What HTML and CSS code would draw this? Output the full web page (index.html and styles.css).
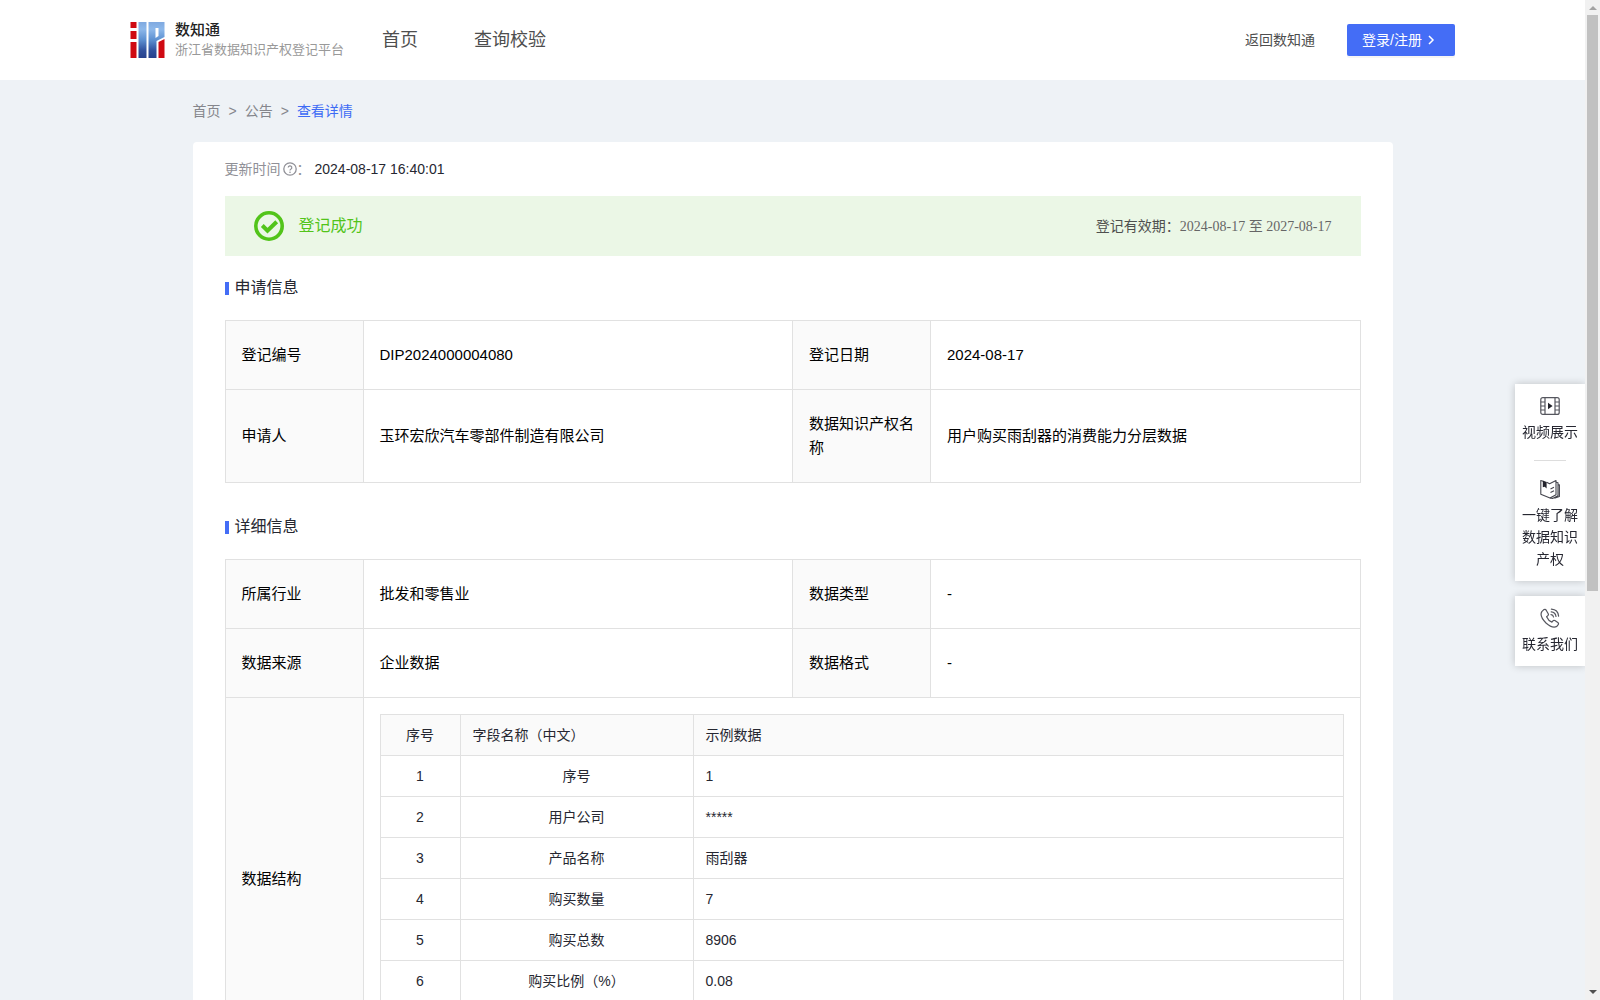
FILE: index.html
```
<!DOCTYPE html>
<html lang="zh-CN">
	<head>
		<meta charset="utf-8">
		<title>浙江省数据知识产权登记平台</title>
		<link rel="stylesheet" href="styles.css">
	</head>
	<body>
		<div class="page">
			<header class="header">
				<a class="logo" href="#">
					<svg class="logo-img" viewBox="0 0 34 36" aria-hidden="true">
						<defs>
							<linearGradient id="blue" x1="0" y1="0" x2="0" y2="1">
								<stop offset="0" stop-color="#7fa9e0"/>
								<stop offset="0.2" stop-color="#8db8ea"/>
								<stop offset="0.5" stop-color="#5c8fd0"/>
								<stop offset="0.8" stop-color="#2f4f9c"/>
								<stop offset="1" stop-color="#26408c"/>
							</linearGradient>
						</defs>
						<path fill="#cf0a12" d="M0 0h6v6H0zM0 9h6v8H0zM0 20h6v16H0zM28 20l6-3v19h-6z"/>
						<path fill="url(#blue)" d="M8 0h8v36H8zM18 0h16v15l-8 4v17h-8z"/>
						<path fill="#fff" d="M25 6h3v8l-3 2z"/>
					</svg>
					<span class="logo-text">
						<strong>数知通</strong>
						<small>浙江省数据知识产权登记平台</small>
					</span>
				</a>
				<nav class="nav">
					<a href="#">首页</a>
					<a href="#">查询校验</a>
				</nav>
				<a class="back" href="#">返回数知通</a>
				<button type="button" class="login">登录/注册
					<svg viewBox="0 0 8 10" aria-hidden="true"><path d="M2 1l4 4-4 4" fill="none" stroke="#fff" stroke-width="1.5"/></svg>
				</button>
			</header>

			<main class="main">
				<div class="crumbs">
					<a href="#">首页</a><span>&gt;</span><a href="#">公告</a><span>&gt;</span><a class="cur" href="#">查看详情</a>
				</div>
				<div class="card">
					<div class="update">
						<span class="gray">更新时间</span>
						<svg viewBox="0 0 14 14" aria-hidden="true"><circle cx="7" cy="7" r="6.2" fill="none" stroke="#909097" stroke-width="1.3"/><path d="M5.2 5.6a1.8 1.8 0 1 1 2.6 1.6c-.6.3-.8.6-.8 1.2" fill="none" stroke="#909097" stroke-width="1.2"/><circle cx="7" cy="10.2" r=".8" fill="#909097"/></svg>
						<span class="gray">：</span>
						<time>2024-08-17 16:40:01</time>
					</div>

					<div class="banner">
						<svg viewBox="0 0 30 30" aria-hidden="true"><circle cx="15" cy="15" r="13.2" fill="none" stroke="#52c41a" stroke-width="3.6"/><path d="M8.300 14.500l5.200 5.200 9.200-9" fill="none" stroke="#52c41a" stroke-width="4"/></svg>
						<span class="state">登记成功</span>
						<span class="valid">登记有效期：<span>2024-08-17 至 2027-08-17</span></span>
					</div>

					<h2 class="title">申请信息</h2>
					<table class="info">
						<tr>
							<th scope="row">登记编号</th>
							<td>DIP2024000004080</td>
							<th scope="row">登记日期</th>
							<td>2024-08-17</td>
						</tr>
						<tr>
							<th scope="row">申请人</th>
							<td>玉环宏欣汽车零部件制造有限公司</td>
							<th scope="row">数据知识产权名称</th>
							<td>用户购买雨刮器的消费能力分层数据</td>
						</tr>
					</table>

					<h2 class="title second">详细信息</h2>
					<table class="info">
						<tr>
							<th scope="row">所属行业</th>
							<td>批发和零售业</td>
							<th scope="row">数据类型</th>
							<td>-</td>
						</tr>
						<tr>
							<th scope="row">数据来源</th>
							<td>企业数据</td>
							<th scope="row">数据格式</th>
							<td>-</td>
						</tr>
						<tr>
							<th scope="row">数据结构</th>
							<td class="inner" colspan="3">
								<table class="fields">
									<thead>
										<tr><th scope="col">序号</th><th scope="col">字段名称（中文）</th><th scope="col">示例数据</th></tr>
									</thead>
									<tbody>
										<tr><td>1</td><td>序号</td><td>1</td></tr>
										<tr><td>2</td><td>用户公司</td><td>*****</td></tr>
										<tr><td>3</td><td>产品名称</td><td>雨刮器</td></tr>
										<tr><td>4</td><td>购买数量</td><td>7</td></tr>
										<tr><td>5</td><td>购买总数</td><td>8906</td></tr>
										<tr><td>6</td><td>购买比例（%）</td><td>0.08</td></tr>
										<tr><td></td><td></td><td></td></tr>
									</tbody>
								</table>
							</td>
						</tr>
					</table>
				</div>
			</main>
		</div>

		<aside class="side">
			<div class="side-box">
				<a href="#">
					<svg viewBox="0 0 20 20" aria-hidden="true"><g fill="none" stroke="#55565e" stroke-width="1.2"><rect x=".8" y="1.6" width="18.4" height="16.8" rx="2"/><path d="M5 1.6v16.8M15 1.6v16.8M.8 6H5M.8 10H5M.8 14H5M15 6h4.2M15 10h4.2M15 14h4.2"/></g><path fill="#22232b" d="M8 6.8l4.600 3.200L8 13.200z"/></svg>
					视频展示
				</a>
				<hr>
				<a href="#">
					<svg viewBox="0 0 20 20" aria-hidden="true"><g fill="none" stroke="#44454d" stroke-width="1.1" stroke-linejoin="round"><path d="M3 2.200L.8 1.500v13.700L10 19l6-3.200V1.600L9.600 4.800 6.600 3.200"/><path d="M16 3.200l2 .5v13L12.500 19.400 10 19M18 5.500l1.400.4v11.600l-5 1.700M10.500 10l3.500-1.800M10.500 13.500l3.500-1.800"/></g><path fill="#22232b" d="M2.800 1.600L6.600 3v6.600L4.700 7.800l-1.900.4z"/></svg>
					一键了解数据知识产权
				</a>
			</div>
			<div class="side-box">
				<a href="#">
					<svg viewBox="0 0 20 20" aria-hidden="true"><g fill="none" stroke="#55565e" stroke-width="1.2" stroke-linejoin="round" stroke-linecap="round"><path d="M3.6 1.8L1.8 3.6C-.2 7 3 12 6 15c3.400 3 7.600 5 10.800 3.400l1.400-1.800c.5-.8.3-1.600-.4-2.100l-2.900-1.900c-.8-.5-1.500-.3-2 .3l-1 1.200c-2-.8-4.400-3.300-5.300-5.400l1.300-1.100c.6-.5.7-1.200.3-1.900L6.200 2.200c-.7-1-1.700-1.100-2.600-.4z"/><path d="M11 6.600c1.300.1 2.300 1.100 2.500 2.400M11.200 3.900c2.700.2 4.500 2 4.800 4.600M11.400 1.200c4.200.3 6.800 2.800 7.200 6.900"/></g></svg>
					联系我们
				</a>
			</div>
		</aside>

		<div class="scroll" aria-hidden="true">
			<i class="up"></i>
			<i class="thumb"></i>
			<i class="down"></i>
		</div>
	</body>
</html>
```
FILE: styles.css
```
*{
	box-sizing: border-box;
}
body, h2, hr{
	margin: 0;
	padding: 0;
}
body{
	height: 100vh;
	overflow: hidden;
	font-family: "Liberation Sans", "Noto Sans CJK SC", sans-serif;
	font-size: 14px;
	line-height: 22px;
	color: #262731;
	background: #eef2f6;
}
a{
	color: inherit;
	text-decoration: none;
}
svg{
	display: block;
	flex: none;
}
.page{
	margin-right: 15px;
}

/*头部*/
.header{
	display: flex;
	align-items: center;
	height: 80px;
	padding: 0 130px;
	background: #fff;
	color: #4e4e4e;
}
.logo{
	display: flex;
	align-items: center;
	gap: 10px;
}
.logo-img{
	width: 35px;
	height: 36px;
}
.logo-text{
	display: flex;
	flex-direction: column;
	line-height: 20px;
}
.logo-text strong{
	font-size: 15px;
	font-weight: 500;
	color: #222;
}
.logo-text small{
	font-size: 13px;
	color: #999;
}
.nav{
	display: flex;
	gap: 56px;
	margin: 0 auto 0 38px;
	font-size: 18px;
}
.login{
	display: flex;
	align-items: center;
	gap: 5px;
	width: 108px;
	height: 32px;
	margin-left: 32px;
	padding: 0 15px;
	border: none;
	border-radius: 2px;
	font: inherit;
	color: #fff;
	background: #446df6;
	box-shadow: 0 2px 0 rgba(0,0,0,0.04);
	white-space: nowrap;
	cursor: pointer;
}
.login svg{
	width: 8px;
	height: 10px;
}

/*内容*/
.main{
	max-width: 1200px;
	margin: 0 auto;
}
.crumbs{
	display: flex;
	align-items: center;
	gap: 8px;
	height: 62px;
	color: #85868c;
}
.crumbs .cur{
	color: #3d6bf5;
}
.card{
	padding: 0 32px 32px;
	border-radius: 4px;
	background: #fff;
}
.update{
	display: flex;
	align-items: center;
	height: 54px;
}
.update svg{
	width: 14px;
	height: 14px;
	margin-left: 2px;
}
.update time{
	margin-left: 4px;
}
.gray{
	color: #909097;
}
.banner{
	display: flex;
	align-items: center;
	height: 60px;
	padding: 0 29px;
	background: #ebf7e6;
}
.banner svg{
	width: 30px;
	height: 30px;
}
.state{
	margin-left: 15px;
	font-size: 16px;
	color: #52c41a;
}
.valid{
	margin-left: auto;
	color: #4e4f4e;
}
.valid span{
	font-family: "Liberation Serif", "Noto Sans CJK SC", serif;
	color: #666;
}
.title{
	display: flex;
	align-items: center;
	gap: 6px;
	height: 64px;
	font-size: 16px;
	font-weight: normal;
}
.title:before{
	content: "";
	width: 4px;
	height: 13px;
	background: #446df6;
}
.second{
	margin-top: 12px;
}

/*表格*/
table{
	width: 100%;
	border-collapse: collapse;
	table-layout: fixed;
}
th, td{
	border: 1px solid #e1e1e1;
	font-weight: normal;
	text-align: left;
}
th{
	background: #fafafa;
}
.info{
	font-size: 15px;
	line-height: 24px;
	color: #000;
}
.info th, .info td{
	padding: 22px 16px;
}
.info tr > th{
	width: 138px;
}
.info .inner{
	padding: 16px;
}
.info .fields{
	font-size: 14px;
	line-height: 22px;
	color: #262731;
}
.info .fields th, .info .fields td{
	width: auto;
	height: 41px;
	padding: 9px 12px;
}
.info .fields th:first-child{
	width: 80px;
}
.info .fields th:nth-child(2){
	width: 233px;
}
.fields th:first-child, .fields td:first-child, .fields td:nth-child(2){
	text-align: center;
}

/*右侧悬浮栏*/
.side{
	position: fixed;
	top: 384px;
	right: 15px;
	display: flex;
	flex-direction: column;
	gap: 15px;
	width: 70px;
}
.side-box{
	padding: 12px 7px 11px;
	background: #fff;
	box-shadow: 0 0 8px rgba(0,0,0,0.2);
}
.side-box a{
	display: flex;
	flex-direction: column;
	align-items: center;
	gap: 5px;
	text-align: center;
}
.side-box svg{
	width: 20px;
	height: 20px;
}
.side-box hr{
	width: 32px;
	margin: 17px auto 18px;
	border: none;
	border-top: 1px solid #ddd;
}

/*滚动条*/
.scroll{
	position: fixed;
	top: 0;
	right: 0;
	bottom: 0;
	display: flex;
	flex-direction: column;
	align-items: center;
	width: 15px;
	padding: 6px 0;
	background: #f1f1f1;
}
.up, .down{
	border: 4px solid transparent;
}
.up{
	border-top: none;
	border-bottom-color: #a3a3a3;
}
.down{
	margin-top: auto;
	border-bottom: none;
	border-top-color: #505050;
}
.thumb{
	width: 11px;
	height: 576px;
	margin-top: 5px;
	background: #c1c1c1;
}
```
